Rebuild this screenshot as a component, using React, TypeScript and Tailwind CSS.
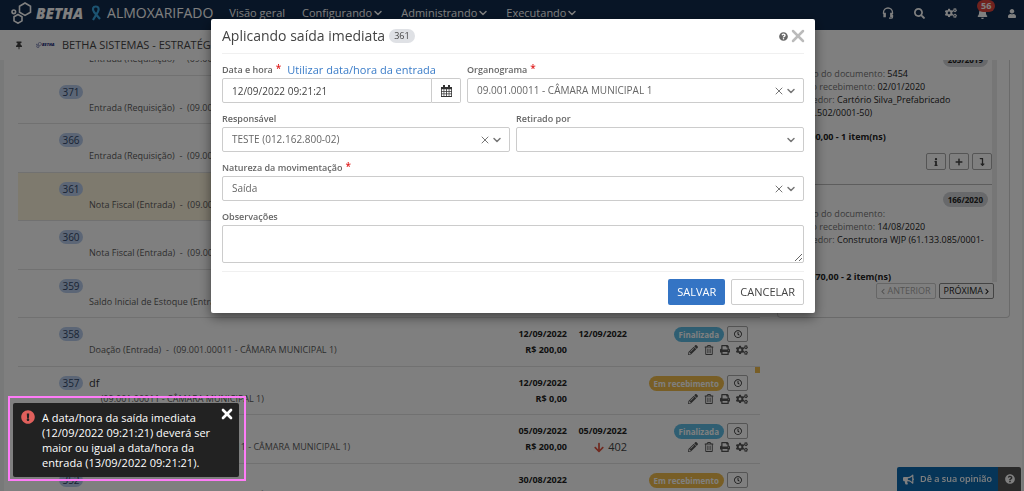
import type { ReactNode } from "react";
import {
    FaArrowDown,
    FaBell,
    FaBullhorn,
    FaChevronLeft,
    FaChevronRight,
    FaCogs,
    FaExclamationCircle,
    FaInfo,
    FaLevelDownAlt,
    FaPencilAlt,
    FaPlus,
    FaPrint,
    FaQuestionCircle,
    FaRegClock,
    FaRegTrashAlt,
    FaSearch,
    FaThumbtack,
    FaUser,
} from "react-icons/fa";
import { ChevronDown, X } from "lucide-react";

type Entry = {
    id: number;
    title?: string;
    text: string;
    active?: boolean;
    date?: string;
    value?: string;
    date2?: string;
    count?: number;
    status?: "Finalizada" | "Em recebimento";
    marker?: boolean;
};

const place = "(09.001.00011 - CÂMARA MUNICIPAL 1)";

const entries: Entry[] = [
    { id: 372, text: `Entrada (Requisição)  -  ${place}` },
    { id: 371, text: `Entrada (Requisição)  -  ${place}` },
    { id: 366, text: `Entrada (Requisição)  -  ${place}` },
    { id: 361, text: `Nota Fiscal (Entrada)  -  ${place}`, active: true },
    { id: 360, text: `Nota Fiscal (Entrada)  -  ${place}` },
    { id: 359, text: `Saldo Inicial de Estoque (Entrada)  -  ${place}` },
    { id: 358, text: `Doação (Entrada)  -  ${place}`, date: "12/09/2022", value: "R$ 200,00", date2: "12/09/2022", status: "Finalizada" },
    { id: 357, title: "df", text: `     ${place}`, date: "12/09/2022", value: "R$ 0,00", status: "Em recebimento", marker: true },
    { id: 353, text: `Requisição (Entrada)  -  ${place}`, date: "05/09/2022", value: "R$ 200,00", date2: "05/09/2022", count: 402, status: "Finalizada" },
    { id: 352, text: `Nota Fiscal (Entrada)  -  ${place}`, date: "30/08/2022", value: "R$ 0,00", status: "Em recebimento" },
];

const documents = [
    { code: "205/2019", number: "5454", received: "02/01/2020", supplier: "Cartório Silva_Prefabricado (17.110.502/0001-50)", total: "R$ 1.000,00 - 1 item(ns)" },
    { code: "166/2020", number: "", received: "14/08/2020", supplier: "Construtora WJP (61.133.085/0001-50)", total: "R$ 13.070,00 - 2 item(ns)" },
];

function Logo({ className }: { className: string }) {
    return (
        <svg className={className} viewBox="0 0 22 22" fill="none" stroke="currentColor" strokeWidth="1.6">
            <path d="M14 1l5.500 3.200v6L14 13.400l-5.500-3.200v-6z" />
            <path d="M7 12.500l4 2.200v4.200l-4 2.300-4-2.300v-4.200z" />
            <circle cx="2.800" cy="9.800" r="1.800" />
        </svg>
    );
}

function Ribbon() {
    return (
        <svg className="w-[10px] h-4 text-[#38a8e4]" viewBox="0 0 10 16" fill="none" stroke="currentColor" strokeWidth="2.200">
            <path d="M9 14L3 7C1 4 2 1.500 4.800 1.500S8.500 4 6.800 7L2 15" />
        </svg>
    );
}

function HeadsetIcon() {
    return (
        <svg className="w-3 h-3" viewBox="0 0 12 12" fill="none" stroke="currentColor" strokeWidth="1.300">
            <path d="M1.500 7V5.500a4.500 4.500 0 019 0V7M10.500 8v2q0 1.200-1.500 1.200H7" />
            <path fill="currentColor" d="M2 6.500h1.200v3H2zM8.800 6.500H10v3H8.800z" />
        </svg>
    );
}

function CalendarIcon() {
    return (
        <svg className="w-[11px] h-3" viewBox="0 0 11 12">
            <path fill="#333" d="M0 2h11v10H0z" />
            <path fill="#333" d="M2 0h2v3H2zM7 0h2v3H7z" />
            <path
                fill="#fff"
                d="M.800 4.200h1.800V6H.800zM3.300 4.200h1.800V6H3.300zM5.900 4.200h1.800V6H5.900zM8.400 4.200h1.800V6H8.400zM.800 6.700h1.800v1.800H.800zM3.300 6.700h1.800v1.800H3.300zM5.900 6.700h1.800v1.800H5.900zM8.400 6.700h1.800v1.800H8.400zM.800 9.300h1.800v1.800H.800zM3.300 9.300h1.800v1.800H3.300zM5.900 9.300h1.800v1.800H5.900zM8.400 9.300h1.800v1.800H8.400z"
            />
        </svg>
    );
}

function TopBar() {
    return (
        <header className="flex items-center h-[30px] pb-1 pl-[11px] pr-2 bg-[#112b4d] text-white shrink-0">
            <Logo className="w-[22px] h-[22px]" />
            <span className="ml-[3px] text-[15px] font-extrabold italic">BETHA</span>
            <span className="ml-2"><Ribbon /></span>
            <span className="ml-[6px] text-sm">ALMOXARIFADO</span>
            <nav className="flex gap-[17px] ml-4 text-[11px]">
                <a href="#visao">Visão geral</a>
                {["Configurando", "Administrando", "Executando"].map((item) => (
                    <a key={item} href="#menu" className="flex items-center">
                        {item}
                        <ChevronDown className="w-3 h-3" strokeWidth={3} />
                    </a>
                ))}
            </nav>
            <div className="flex items-center gap-5 ml-auto text-[11px]">
                <button aria-label="Suporte"><HeadsetIcon /></button>
                <button aria-label="Pesquisar"><FaSearch /></button>
                <button aria-label="Configurações"><FaCogs className="text-xs" /></button>
                <button aria-label="Notificações" className="relative">
                    <FaBell />
                    <span className="absolute -top-2 left-0 px-1 rounded-full bg-[#e0443c] text-[9px] leading-3 font-bold">56</span>
                </button>
                <button aria-label="Usuário"><FaUser className="w-2" /></button>
            </div>
        </header>
    );
}

function EntryRow({ entry }: { entry: Entry }) {
    return (
        <li className={`relative flex odd:h-[49px] even:h-[48px] pl-[41px] pr-3 border-b border-[#e2e2e2] shrink-0 ${entry.active ? "bg-[#fcf4dc]" : ""}`}>
            <span className="w-6 h-[14px] mt-[9px] mr-[6px] rounded-full bg-[#b9cdec] text-[#34496b] text-[10px] leading-[14px] text-center">{entry.id}</span>
            <div className="flex-1 min-w-0 pt-2">
                <p className="h-4 text-[11px] leading-4 text-[#333]">{entry.title}</p>
                <p className="text-[9px] leading-4 text-[#5c5c5c] whitespace-pre">{entry.text}</p>
            </div>
            {entry.status && (
                <>
                    <div className="w-[60px] pt-2 text-[9px] leading-4 font-bold text-right text-[#222]">
                        <p>{entry.date}</p>
                        <p>{entry.value}</p>
                    </div>
                    <div className="w-[60px] pt-2 text-[9px] leading-4 font-bold text-right text-[#222]">
                        <p className="h-4">{entry.date2}</p>
                        {entry.count && (
                            <p className="flex items-center justify-end gap-1 text-[11px] leading-4 font-normal text-[#444]">
                                <FaArrowDown className="w-[10px] text-[#e0533f]" />
                                {entry.count}
                            </p>
                        )}
                    </div>
                    <div className="w-[121px] pt-2 text-[#555]">
                        <div className="flex items-center justify-end gap-[3px]">
                            <span className={`h-[15px] px-[5px] rounded-full text-[8px] leading-[15px] font-bold text-white ${entry.status === "Finalizada" ? "bg-[#5fbde4]" : "bg-[#f0bd4c]"}`}>
                                {entry.status}
                            </span>
                            <button aria-label="Histórico" className="grid place-items-center w-[21px] h-4 border border-[#aaa] rounded-xs text-[8px] text-[#222]"><FaRegClock /></button>
                        </div>
                        <div className="flex justify-end gap-[6px] mt-[2px] text-[10px]">
                            <button aria-label="Editar"><FaPencilAlt /></button>
                            <button aria-label="Excluir"><FaRegTrashAlt /></button>
                            <button aria-label="Imprimir"><FaPrint /></button>
                            <button aria-label="Opções"><FaCogs className="text-xs" /></button>
                        </div>
                    </div>
                </>
            )}
            {entry.marker && <span className="absolute top-0 right-0 w-[5px] h-[6px] bg-[#f0bd4c]" />}
        </li>
    );
}

function Documents() {
    return (
        <aside className="w-[233px] h-[258px] pr-3 border border-t-0 border-[#d4d4d4] rounded-b-sm text-[9px] shrink-0">
            <div className="flex h-[222px] overflow-hidden">
                <ul className="flex-1 -mt-4">
                    {documents.map((doc) => (
                        <li key={doc.code} className="flex flex-col h-[140px] pl-[6px] border-t border-[#bbb] text-[#222]">
                            <span className="self-end h-[15px] mt-[7px] mr-1 px-[5px] rounded-full bg-[#d0d3d6] text-[8px] leading-[15px] font-bold">{doc.code}</span>
                            <div className="h-[52px] pr-[6px] leading-[13px]">
                                <p><span className="text-[#777]">Número do documento:</span> {doc.number}</p>
                                <p><span className="text-[#777]">Data do recebimento:</span> {doc.received}</p>
                                <p><span className="text-[#777]">Fornecedor:</span> {doc.supplier}</p>
                            </div>
                            <p className="mt-[10px] leading-4 font-bold">{doc.total}</p>
                            <div className="flex justify-end gap-[3px] mt-2 text-[8px] text-[#444]">
                                <button aria-label="Informações" className="grid place-items-center w-5 h-[17px] border border-[#aaa] rounded-xs"><FaInfo /></button>
                                <button aria-label="Adicionar" className="grid place-items-center w-5 h-[17px] border border-[#aaa] rounded-xs"><FaPlus /></button>
                                <button aria-label="Baixar" className="grid place-items-center w-5 h-[17px] border border-[#aaa] rounded-xs"><FaLevelDownAlt /></button>
                            </div>
                        </li>
                    ))}
                </ul>
                <div className="w-[5px] bg-[#ececec]" />
            </div>
            <div className="flex justify-end gap-[3px] mt-[1px] mr-[3px]">
                <button className="flex items-center gap-[2px] h-4 px-1 border border-[#ccc] rounded-xs text-[#aaa]" disabled>
                    <FaChevronLeft className="w-1" />ANTERIOR
                </button>
                <button className="flex items-center gap-[2px] h-4 px-1 border border-[#888] rounded-xs text-[#222]">
                    PRÓXIMA<FaChevronRight className="w-1" />
                </button>
            </div>
        </aside>
    );
}

function Label({ htmlFor, required, children }: { htmlFor: string; required?: boolean; children: ReactNode }) {
    return (
        <label htmlFor={htmlFor} className="text-[9px] leading-4 font-semibold text-[#666]">
            {children}
            {required && <span className="ml-[3px] align-top text-[10px] leading-3 text-[#e02020]">*</span>}
        </label>
    );
}

function SelectField({ id, label, value, required, className }: { id: string; label: string; value?: string; required?: boolean; className: string }) {
    return (
        <div className={`flex flex-col pt-2 ${className}`}>
            <div className="h-4 flex"><Label htmlFor={id} required={required}>{label}</Label></div>
            <div className="relative">
                <select id={id} className="block w-full h-[25px] pl-[9px] pr-10 border border-[#ccc] rounded-xs bg-white text-[10px] text-[#666] appearance-none">
                    <option>{value}</option>
                </select>
                <div className="absolute inset-y-0 right-[7px] flex items-center text-[#777] pointer-events-none">
                    {value && <X className="w-3 h-3" strokeWidth={2} />}
                    <ChevronDown className="w-3 h-3" strokeWidth={3} />
                </div>
            </div>
        </div>
    );
}

function ExitDialog() {
    return (
        <div role="dialog" aria-label="Aplicando saída imediata" className="w-[604px] mx-auto mt-[19px] px-[11px] pb-2 bg-white rounded-xs shadow-[0_4px_12px_rgba(0,0,0,0.5)]">
            <div className="flex items-center h-[35px] border-b border-[#f0f0f0]">
                <h1 className="text-sm text-[#444]">Aplicando saída imediata</h1>
                <span className="h-[14px] ml-1 px-[5px] rounded-full bg-[#dfe1e5] text-[9px] leading-[14px] text-[#444]">361</span>
                <button aria-label="Ajuda" className="ml-auto text-[9px] text-[#666]"><FaQuestionCircle /></button>
                <button aria-label="Fechar" className="-mr-1 text-[#bbb]"><X className="w-5 h-5" strokeWidth={3} /></button>
            </div>
            <form className="grid grid-cols-12 gap-x-[6px]">
                <div className="col-span-5 pt-2">
                    <div className="flex h-4 gap-[6px]">
                        <Label htmlFor="datetime" required>Data e hora</Label>
                        <a href="#entrada" className="text-[11px] leading-4 text-[#3a7cc8]">Utilizar data/hora da entrada</a>
                    </div>
                    <div className="flex">
                        <input id="datetime" defaultValue="12/09/2022 09:21:21" className="flex-1 min-w-0 h-[25px] px-[9px] border border-[#ccc] rounded-l-xs text-[10px] text-[#444]" />
                        <button type="button" aria-label="Abrir calendário" className="grid place-items-center w-[29px] h-[25px] border border-l-0 border-[#ccc] rounded-r-xs"><CalendarIcon /></button>
                    </div>
                </div>
                <SelectField id="organograma" label="Organograma" value="09.001.00011 - CÂMARA MUNICIPAL 1" required className="col-span-7" />
                <SelectField id="responsavel" label="Responsável" value="TESTE (012.162.800-02)" className="col-span-6" />
                <SelectField id="retirado" label="Retirado por" className="col-span-6" />
                <SelectField id="natureza" label="Natureza da movimentação" value="Saída" required className="col-span-12" />
                <div className="flex flex-col col-span-12 pt-2">
                    <Label htmlFor="obs">Observações</Label>
                    <textarea id="obs" className="h-[38px] px-[9px] border border-[#ccc] rounded-xs text-[10px] resize-y"></textarea>
                </div>
            </form>
            <div className="flex justify-end gap-[6px] mt-2 pt-[7px] border-t border-[#f0f0f0] text-[11px]">
                <button className="h-[26px] px-[9px] rounded-xs bg-[#3474c4] text-white">SALVAR</button>
                <button className="h-[26px] px-2 border border-[#ccc] rounded-xs text-[#444]">CANCELAR</button>
            </div>
        </div>
    );
}

export default function App() {
    return (
        <div className="relative flex flex-col h-screen overflow-hidden bg-white font-['Open_Sans',sans-serif]">
            <TopBar />
            <div className="flex items-center h-[30px] pl-4 text-[11px] text-[#444] shrink-0">
                <FaThumbtack className="w-[6px] mr-[14px]" />
                <span className="flex items-center w-[26px] text-[#1c2a7a] text-[4px] leading-none font-extrabold italic"><Logo className="w-[6px] h-[6px]" />BETHA</span>
                BETHA SISTEMAS - ESTRATÉGIA
            </div>
            <main className="flex items-start flex-1 min-h-0 pr-3 border-l-4 border-r-2 border-[#f0f3f3] overflow-hidden">
                <ul className="flex flex-col flex-1 -mt-[33px] ml-[14px] mr-[17px]">
                    {entries.map((entry) => (
                        <EntryRow key={entry.id} entry={entry} />
                    ))}
                </ul>
                <Documents />
            </main>
            <div className="fixed bottom-0 right-[3px] flex h-6 text-[9px] text-white">
                <button className="flex items-center gap-[6px] px-[6px] rounded-tl-xs bg-[#0d6ab0] font-semibold"><FaBullhorn className="text-[11px]" />Dê a sua opinião</button>
                <button aria-label="Ajuda" className="grid place-items-center w-[23px] rounded-tr-xs bg-[#555] text-[10px]"><FaQuestionCircle /></button>
            </div>
            <div className="fixed inset-0 pl-[2px] bg-black/50">
                <ExitDialog />
            </div>
            <div className="fixed left-2 bottom-[10px] pt-[5px] pr-[5px] pb-[2px] pl-[3px] border-2 border-[#ff7cf8]">
                <div role="alert" className="flex items-start w-[226px] py-[7px] px-2 rounded-xs bg-[#222] text-white">
                    <FaExclamationCircle className="w-[14px] h-[14px] text-[#e0605c]" />
                    <p className="flex-1 ml-[7px] text-[11px] leading-[15px]">
                        A data/hora da saída imediata<br />(12/09/2022 09:21:21) deverá ser<br />maior ou igual a data/hora da<br />entrada (13/09/2022 09:21:21).
                    </p>
                    <button aria-label="Fechar aviso" className="-mt-1 -mr-1"><X className="w-4 h-4" strokeWidth={4} /></button>
                </div>
            </div>
        </div>
    );
}
